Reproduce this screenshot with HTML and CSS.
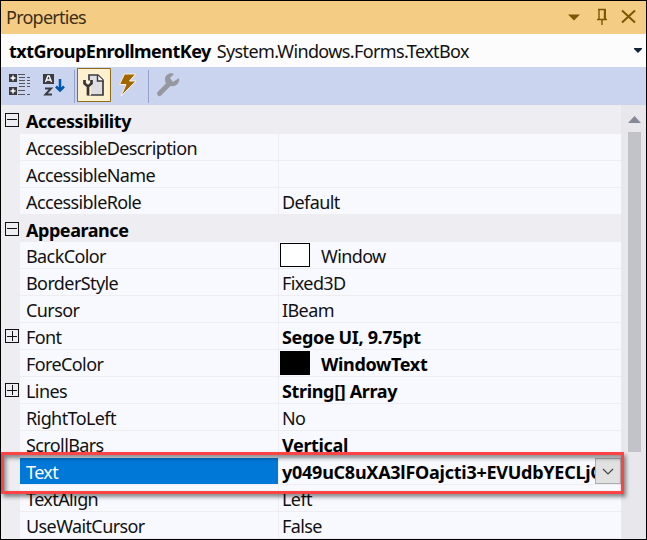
FILE: index.html
```
<!DOCTYPE html>
<html lang="en">
<head>
<meta charset="utf-8">
<title>Properties</title>
<link rel="stylesheet" href="styles.css">
</head>
<body>
<div class="panel">
  <header class="titlebar">
    <span class="title">Properties</span>
    <svg class="title-icons" width="80" height="33" viewBox="566 1 80 33" fill="none" stroke="#7d5604">
      <path d="M568 14.500h12l-6 6z" fill="#7d5604" stroke="none"/>
      <path d="M598 9.500h8M599 9.500v10M604.500 10v9M597 19.500h10M602 20v5" stroke-width="1.400"/>
      <path d="M605 9v10" stroke-width="2"/>
      <path d="M622 10.500l13 12M635 10.500l-13 12" stroke-width="2"/>
    </svg>
  </header>
  <div class="object">
    <span class="object-name">txtGroupEnrollmentKey</span>
    <span class="object-type">System.Windows.Forms.TextBox</span>
    <svg class="object-arrow" width="8" height="5" viewBox="0 0 8 5"><path d="M0 0h8v1L4 5 0 1z" fill="#14233c"/></svg>
  </div>
  <div class="toolbar">
    <svg width="200" height="38" viewBox="1 67 200 38">
      <path d="M9 74h8v8H9zM9 87h8v8H9z" fill="#3c3c40"/>
      <path d="M13 75.500v5M10.500 78h5M13 88.500v5M10.500 91h5" stroke="#fff" stroke-width="1.500"/>
      <path d="M18 74.500h7M19 77.500h6M19 80.500h6M19 83.500h6M19 86.500h6M18 90.500h7M18 94.500h7M27 77.500h3M27 80.500h3M27 83.500h3M27 86.500h3M27 94.500h3" stroke="#55555c"/>
      <path d="M43 74h11v10H43z" fill="#3c3c40"/>
      <path d="M45.500 82l2.300-6h1.400l2.300 6M46.500 80h4" stroke="#fff" stroke-width="1.300" fill="none"/>
      <path d="M45 88.500h6l-5.500 6H52" stroke="#3c3c40" stroke-width="2" fill="none"/>
      <path d="M60 79v12M56 86.500l4 4 4-4" stroke="#0055ac" stroke-width="2.500" fill="none"/>
      <path d="M74.500 70v33M148.500 70v33" stroke="#92a4ce"/>
      <path d="M77.500 68.500h33v33h-33z" fill="#fff1cf" stroke="#936b14"/>
      <path d="M89 75h9l5 5v15H89z" fill="#dedee3" stroke="#3c3c40" stroke-width="1.700"/>
      <path d="M97.500 75v6h6" fill="#fff" stroke="#3c3c40" stroke-width="1.500"/>
      <path d="M86.500 80.500v3l1.500 1.500 1.500-1.500v-3M88 86v9.500" fill="none" stroke="#fff1cf" stroke-width="6"/>
      <path d="M84.500 80v3.500l3.500 3 3.500-3V80M88 86v9.500" fill="none" stroke="#36363a" stroke-width="2.700"/>
      <path d="M124.500 74h11l-6 7h6.500l-15 15 5-11.500h-6.500z" fill="#a26600" stroke="#fff1dc"/>
      <path d="M159.500 93.500l9-9" stroke="#96979f" stroke-width="5" stroke-linecap="round"/>
      <path d="M165 79c0-4 5-7 9-5l-4 4 3 4 6-4c1 5-3 9-8 8-4 0-6-3-6-7z" fill="#96979f"/>
    </svg>
  </div>
  <div class="body">
    <main class="grid">
      <div class="heading first"><i class="box"></i><b>Accessibility</b></div>
      <div class="row"><i class="gutter"></i><span class="key">AccessibleDescription</span><span class="val"></span></div>
      <div class="row"><i class="gutter"></i><span class="key">AccessibleName</span><span class="val"></span></div>
      <div class="row"><i class="gutter"></i><span class="key">AccessibleRole</span><span class="val">Default</span></div>
      <div class="heading"><i class="box"></i><b>Appearance</b></div>
      <div class="row"><i class="gutter"></i><span class="key">BackColor</span><span class="val"><i class="swatch"></i>Window</span></div>
      <div class="row"><i class="gutter"></i><span class="key">BorderStyle</span><span class="val">Fixed3D</span></div>
      <div class="row"><i class="gutter"></i><span class="key">Cursor</span><span class="val">IBeam</span></div>
      <div class="row"><i class="gutter"><i class="box plus"></i></i><span class="key">Font</span><b class="val">Segoe UI, 9.75pt</b></div>
      <div class="row"><i class="gutter"></i><span class="key">ForeColor</span><b class="val"><i class="swatch dark"></i>WindowText</b></div>
      <div class="row"><i class="gutter"><i class="box plus"></i></i><span class="key">Lines</span><b class="val">String[] Array</b></div>
      <div class="row"><i class="gutter"></i><span class="key">RightToLeft</span><span class="val">No</span></div>
      <div class="row"><i class="gutter"></i><span class="key">ScrollBars</span><b class="val">Vertical</b></div>
      <div class="row selected"><i class="gutter"></i><span class="key">Text</span><b class="val">y049uC8uXA3lFOajcti3+EVUdbYECLjC</b>
        <span class="drop"><svg width="12" height="7" viewBox="0 0 12 7"><path d="M1 1l5 5 5-5" fill="none" stroke="#444" stroke-width="1.200"/></svg></span></div>
      <div class="row"><i class="gutter"></i><span class="key">TextAlign</span><span class="val">Left</span></div>
      <div class="row"><i class="gutter"></i><span class="key">UseWaitCursor</span><span class="val">False</span></div>
    </main>
    <aside class="scrollbar">
      <svg width="13" height="7" viewBox="0 0 13 7"><path d="M0 7h13L6.500 0z" fill="#868999"/></svg>
      <div class="thumb"></div>
    </aside>
  </div>
  <div class="callout"></div>
</div>
</body>
</html>
```
FILE: styles.css
```
* { box-sizing: border-box; }
body { margin: 0; }
.panel {
  position: relative;
  width: 647px;
  height: 540px;
  border: 1px solid #000;
  overflow: hidden;
  background: #eeedf2;
  color: #111;
  font: 18px/26px "Noto Sans", "Open Sans", sans-serif;
  letter-spacing: -0.6px;
  white-space: nowrap;
}
.titlebar { height: 33px; display: flex; justify-content: space-between; background: #f5cc84; }
.title { padding: 3px 0 0 5px; color: #3b2e18; letter-spacing: -0.75px; }
.title-icons { display: block; flex: none; }
.object { height: 33px; display: flex; align-items: center; padding: 0 4px 0 8px; background: #fcfcfc; }
.object-name { font-weight: 700; color: #000; letter-spacing: -0.53px; }
.object-type { margin-left: 6px; letter-spacing: -0.63px; }
.object-arrow { margin-left: auto; }
.toolbar { height: 38px; background: #cad4ee; }
.toolbar svg { display: block; }
.body { display: flex; height: 434px; }
.grid { width: 620px; }
.heading { height: 27px; display: flex; align-items: center; padding-left: 4px; color: #000; }
.heading.first { height: 29px; }
.heading b { margin-left: 7px; padding-top: 2px; letter-spacing: -0.45px; }
.row { height: 27px; display: flex; line-height: 28px; }
.gutter { width: 19px; flex: none; padding: 6px 0 0 4px; }
.key { width: 258px; flex: none; padding-left: 6px; background: #f8f9fe; border-bottom: 1px solid #eeedf2; }
.val { flex: 1; min-width: 0; display: flex; overflow: hidden; padding-left: 3px; background: #f8f9fe; border-left: 1px solid #eeedf2; border-bottom: 1px solid #eeedf2; }
b.val { color: #000; letter-spacing: -0.35px; }
.box {
  display: block;
  width: 14px;
  height: 14px;
  flex: none;
  border: 1px solid #111;
  background: linear-gradient(#111, #111) center / 10px 1px no-repeat;
}
.plus { background: linear-gradient(#111, #111) center / 10px 1px no-repeat, linear-gradient(#111, #111) center / 1px 10px no-repeat; }
.swatch { width: 30px; height: 24px; flex: none; margin: 1px 11px 0 -2px; border: 1px solid #000; background: #fff; }
.swatch.dark { background: #000; }
.selected .key { background: #0078d7; color: #fff; }
.selected .val { letter-spacing: -0.26px; }
.drop { width: 26px; height: 26px; flex: none; display: flex; align-items: center; justify-content: center; border: 1px solid #adadad; background: #e1e1e1; }
.scrollbar { flex: 1; display: flex; flex-direction: column; align-items: center; padding: 11px 0 0 2px; background: #e8e7ec; }
.scrollbar svg { flex: none; }
.thumb { width: 13px; height: 320px; margin-top: 9px; background: #c2c3c9; }
.callout { position: absolute; left: 0; top: 451px; width: 623px; height: 42px; border: 3px solid #fd4344; box-shadow: 2px 3px 4px rgba(0, 0, 0, .45), inset 2px 3px 4px rgba(0, 0, 0, .45); }
```
